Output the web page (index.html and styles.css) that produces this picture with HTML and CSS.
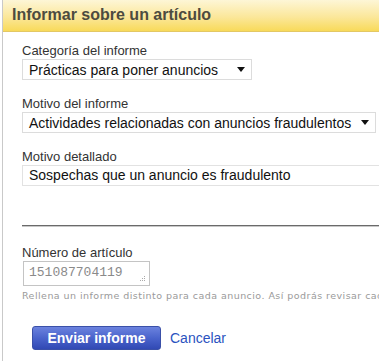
FILE: index.html
```html
<!DOCTYPE html>
<html>
	<head>
		<title>Informar sobre un artículo</title>
		<meta charset="utf-8">
		<link rel="icon" href="data:,">
		<meta name="viewport" content="width=device-width, initial-scale=1">
		<link rel="stylesheet" href="styles.css">
	</head>
	<body>
		<div class="panel">
			<div class="panel-head">Informar sobre un artículo</div>
			<form class="panel-body">
				<div class="field">
					<label>Categoría del informe</label>
					<div class="select select-short">
						<span>Prácticas para poner anuncios</span>
						<span class="arrow"></span>
					</div>
				</div>
				<div class="field">
					<label>Motivo del informe</label>
					<div class="select select-long">
						<span>Actividades relacionadas con anuncios fraudulentos</span>
						<span class="arrow"></span>
					</div>
				</div>
				<div class="field">
					<label>Motivo detallado</label>
					<div class="text-input">Sospechas que un anuncio es fraudulento</div>
				</div>
				<div class="rule"></div>
				<div class="field">
					<label>Número de artículo</label>
					<div class="item-box">
						<span>151087704119</span>
						<svg class="grip" width="6" height="6" viewBox="0 0 6 6">
							<rect x="4" y="0" width="1" height="1" fill="#aaa"/>
							<rect x="2" y="2" width="1" height="1" fill="#aaa"/>
							<rect x="4" y="2" width="1" height="1" fill="#aaa"/>
							<rect x="0" y="4" width="1" height="1" fill="#aaa"/>
							<rect x="2" y="4" width="1" height="1" fill="#aaa"/>
							<rect x="4" y="4" width="1" height="1" fill="#aaa"/>
						</svg>
					</div>
					<p class="help">Rellena un informe distinto para cada anuncio. Así podrás revisar cada uno.</p>
				</div>
				<div class="actions">
					<button type="submit">Enviar informe</button>
					<a href="#">Cancelar</a>
				</div>
			</form>
		</div>
	</body>
</html>
```

FILE: styles.css
```css
html{
	font-family: 'Liberation Sans', Arial, sans-serif;
	font-size: 13px;
	color: #333;
}
body{
	margin: 0;
	background-color: #fff;
	overflow: hidden;
	white-space: nowrap;
}
.panel{
	margin-left: 2px;
	border-left: 1px solid #c9c9c9;
	min-height: 361px;
}
.panel-head{
	height: 31px;
	line-height: 30px;
	padding-left: 9px;
	font-size: 16px;
	font-weight: bold;
	color: #4d4b40;
	background: linear-gradient(to bottom, #fdf6d6 0%, #fbe79a 55%, #f8da5a 100%);
	border-bottom: 1px solid #e3c865;
}
.panel-body{
	padding: 11px 0 0 19px;
}
.field{
	margin-bottom: 16px;
}
.field label{
	display: block;
	line-height: 15px;
	margin-bottom: 1px;
}
.select{
	display: flex;
	justify-content: space-between;
	align-items: center;
	height: 19px;
	border: 1px solid #dcdcdc;
	padding: 0 6px 0 6px;
	font-size: 14px;
	color: #111;
}
.select-short{
	width: 216px;
}
.select-long{
	width: 340px;
}
.arrow{
	width: 0;
	height: 0;
	border-left: 4px solid transparent;
	border-right: 4px solid transparent;
	border-top: 5px solid #111;
}
.text-input{
	width: 380px;
	height: 19px;
	line-height: 19px;
	border: 1px solid #e2e2e2;
	border-right: none;
	padding-left: 6px;
	font-size: 14px;
	color: #111;
}
.rule{
	height: 1px;
	margin: 39px 0 18px 0;
	background-color: #6a6a6a;
	border-bottom: 1px solid #c8c8c8;
}
.item-box{
	position: relative;
	width: 120px;
	height: 23px;
	line-height: 21px;
	margin-left: 1px;
	border: 1px solid #c4c4c4;
	padding-left: 5px;
	font-family: 'Liberation Mono', 'Courier New', monospace;
	font-size: 13px;
	color: #8a8a8a;
}
.grip{
	position: absolute;
	right: 3px;
	bottom: 3px;
}
.help{
	margin: 4px 0 0 0;
	font-family: 'DejaVu Sans', Verdana, sans-serif;
	font-size: 9.5px;
	letter-spacing: 0.45px;
	color: #9a9a9a;
}
.actions{
	display: flex;
	align-items: flex-start;
	gap: 9px;
	padding: 9px 0 0 10px;
}
.actions button{
	width: 129px;
	height: 24px;
	border: 1px solid #3a50a8;
	border-radius: 3px;
	background: linear-gradient(to bottom, #6b82de 0%, #4a64cc 50%, #3149b4 100%);
	color: #fff;
	font-family: 'Liberation Sans', Arial, sans-serif;
	font-size: 14px;
	font-weight: bold;
	padding: 0;
}
.actions a{
	font-size: 14px;
	color: #2b53c0;
	text-decoration: none;
	line-height: 20px;
	margin-top: 2px;
}
```
